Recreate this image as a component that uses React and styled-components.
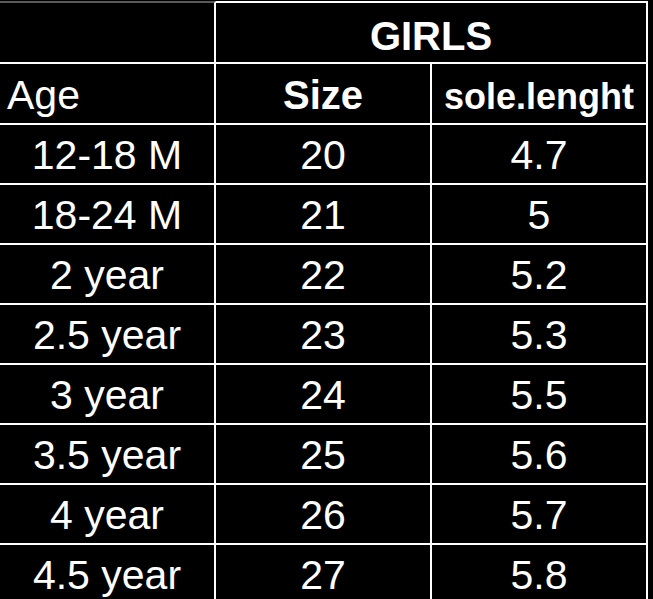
import styled, { createGlobalStyle } from "styled-components";

const GlobalStyle = createGlobalStyle`
  * { box-sizing: border-box; }
  html, body {
    margin: 0;
    padding: 0;
    background: #000;
    overflow: hidden;
    height: 599px;
  }
  body {
    font-family: "Liberation Sans", Arial, sans-serif;
    color: #fff;
  }
`;

const Wrapper = styled.div`
  padding-top: 1px;
  background: #000;
`;

const SizeTable = styled.table`
  width: 648px;
  table-layout: fixed;
  border-collapse: separate;
  border-spacing: 0;
`;

const Col = styled.col`
  width: 216px;
`;

const Cell = styled.td`
  padding: 0;
  padding-top: ${(p) => p.$pt ?? 3}px;
  height: ${(p) => p.$h || 60}px;
  border-right: 2px solid #fff;
  border-bottom: 2px solid #fff;
  border-top: ${(p) => (p.$top ? `2px solid ${p.$top}` : "none")};
  text-align: ${(p) => (p.$left ? "left" : "center")};
  padding-left: ${(p) => (p.$left ? "7px" : "0")};
  vertical-align: middle;
  font-size: ${(p) => p.$fs || 41}px;
  line-height: 1;
  font-weight: 400;
  color: #fff;
  white-space: nowrap;
`;

const HeadCell = styled(Cell)`
  font-weight: 700;
`;

const rows = [
  ["12-18 M", "20", "4.7"],
  ["18-24 M", "21", "5"],
  ["2 year", "22", "5.2"],
  ["2.5 year", "23", "5.3"],
  ["3 year", "24", "5.5"],
  ["3.5 year", "25", "5.6"],
  ["4 year", "26", "5.7"],
  ["4.5 year", "27", "5.8"],
];

export default function App() {
  return (
    <Wrapper>
      <GlobalStyle />
      <SizeTable>
        <colgroup>
          <Col />
          <Col />
          <Col />
        </colgroup>
        <thead>
          <tr>
            <Cell $h={63} $top="#5a5a5a"></Cell>
            <HeadCell colSpan={2} $h={63} $top="#fff" $pt={6} $fs={40}>
              GIRLS
            </HeadCell>
          </tr>
          <tr>
            <Cell $h={61} $left $pt={4}>Age</Cell>
            <HeadCell $h={61} $pt={3} $fs={40}>Size</HeadCell>
            <HeadCell $h={61} $fs={36} $pt={6}>sole.lenght</HeadCell>
          </tr>
        </thead>
        <tbody>
          {rows.map((r) => (
            <tr key={r[0]}>
              <Cell>{r[0]}</Cell>
              <Cell>{r[1]}</Cell>
              <Cell>{r[2]}</Cell>
            </tr>
          ))}
        </tbody>
      </SizeTable>
    </Wrapper>
  );
}
